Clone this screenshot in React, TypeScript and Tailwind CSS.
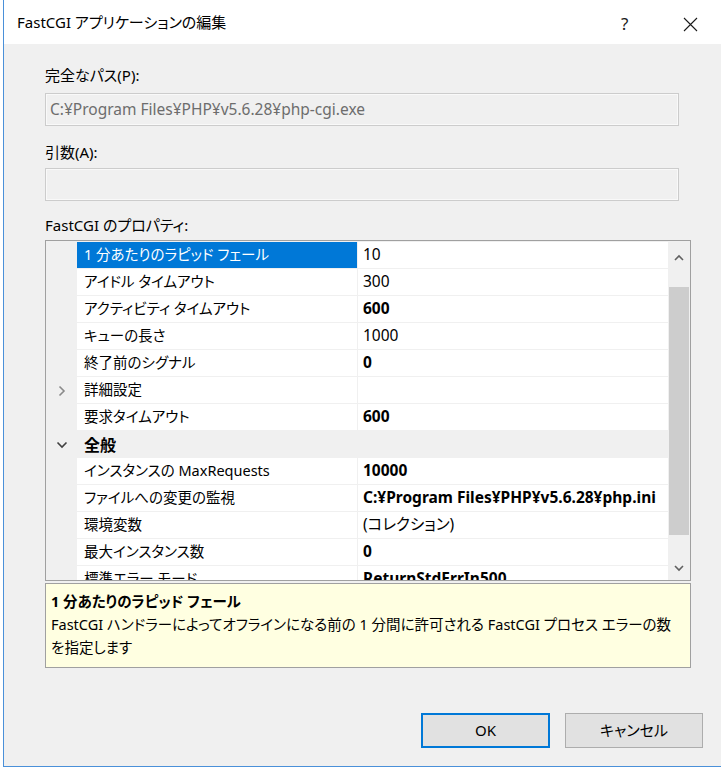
import React from "react";

type Row = {
  name: string;
  value?: string;
  bold?: boolean;
  selected?: boolean;
  chevron?: "right" | "down";
  category?: boolean;
};

const rows: Row[] = [
  { name: "1 分あたりのラピッド フェール", value: "10", selected: true },
  { name: "アイドル タイムアウト", value: "300" },
  { name: "アクティビティ タイムアウト", value: "600", bold: true },
  { name: "キューの長さ", value: "1000" },
  { name: "終了前のシグナル", value: "0", bold: true },
  { name: "詳細設定", value: "", chevron: "right" },
  { name: "要求タイムアウト", value: "600", bold: true },
  { name: "全般", category: true, chevron: "down" },
  { name: "インスタンスの MaxRequests", value: "10000", bold: true },
  { name: "ファイルへの変更の監視", value: "C:¥Program Files¥PHP¥v5.6.28¥php.ini", bold: true },
  { name: "環境変数", value: "(コレクション)" },
  { name: "最大インスタンス数", value: "0", bold: true },
  { name: "標準エラー モード", value: "ReturnStdErrIn500", bold: true },
];

function Chevron({ dir }: { dir: "right" | "down" }) {
  if (dir === "right") {
    return (
      <svg width="8" height="12" viewBox="0 0 8 12">
        <path d="M1.5 1.5 L6 6 L1.5 10.5" fill="none" stroke="#8a8a8a" strokeWidth="1.6" />
      </svg>
    );
  }
  return (
    <svg width="12" height="8" viewBox="0 0 12 8">
      <path d="M1.5 1.5 L6 6 L10.5 1.5" fill="none" stroke="#404040" strokeWidth="1.6" />
    </svg>
  );
}

function GridRow({ row }: { row: Row }) {
  if (row.category) {
    return (
      <div className="flex h-[27px] shrink-0 bg-[#f0f0f0]">
        <div className="w-[31px] flex items-center justify-center">
          {row.chevron && <Chevron dir={row.chevron} />}
        </div>
        <div className="flex-1 flex items-center pl-[7px] font-bold text-[16px]">{row.name}</div>
      </div>
    );
  }
  return (
    <div className="flex h-[27px] shrink-0">
      <div className="w-[31px] flex items-center justify-center bg-[#f0f0f0]">
        {row.chevron && <Chevron dir={row.chevron} />}
      </div>
      <div
        className={
          row.selected
            ? "w-[280px] flex items-center pl-[7px] bg-[#0078d7] text-white border-b border-[#f0f0f0] whitespace-nowrap text-[14.5px]"
            : "w-[280px] flex items-center pl-[7px] bg-white border-b border-[#f0f0f0] whitespace-nowrap text-[14.5px]"
        }
      >
        {row.name}
      </div>
      <div className="w-px bg-[#f0f0f0]" />
      <div
        className={
          row.bold
            ? "flex-1 flex items-center pl-[5px] bg-white border-b border-[#f0f0f0] font-bold whitespace-nowrap text-[15.5px]"
            : "flex-1 flex items-center pl-[5px] bg-white border-b border-[#f0f0f0] whitespace-nowrap text-[15.5px]"
        }
      >
        {row.value}
      </div>
    </div>
  );
}

export default function App() {
  return (
    <div className="w-[721px] h-[768px] bg-white pl-[3px] overflow-hidden">
      <div
        className="h-[767px] flex flex-col bg-[#f0f0f0] border-l border-b border-[#4a90d9] text-[15px] text-black [font-feature-settings:'palt']"
        style={{ fontFamily: '"Noto Sans", "Noto Sans CJK JP", sans-serif' }}
      >
        {/* Title bar */}
        <div className="h-[44px] bg-white flex items-center pl-[13px] shrink-0 relative">
          <span className="text-[15px]">FastCGI アプリケーションの編集</span>
          <span className="absolute left-[617px] top-[11px] text-[17px] text-[#1a1a1a]">?</span>
          <svg className="absolute left-[679px] top-[17px]" width="15" height="15" viewBox="0 0 15 15">
            <path d="M1 1 L14 14 M14 1 L1 14" stroke="#1a1a1a" strokeWidth="1.1" />
          </svg>
        </div>

        {/* Body */}
        <div className="flex flex-col pl-[41px] pr-[28px]">
          <div className="mt-[21px] h-[20px] leading-[20px]">完全なパス(P):</div>
          <div className="mt-[8px] h-[33px] border border-[#cccccc] shadow-[inset_0_0_0_1px_#f9f9f9] flex items-center pl-[4px] text-[#6d6d6d] text-[15.5px] w-[634px]">
            C:¥Program Files¥PHP¥v5.6.28¥php-cgi.exe
          </div>
          <div className="mt-[16px] h-[20px] leading-[20px]">引数(A):</div>
          <div className="mt-[6px] h-[33px] border border-[#cccccc] shadow-[inset_0_0_0_1px_#f9f9f9] w-[634px]" />
          <div className="mt-[14px] h-[20px] leading-[20px]">FastCGI のプロパティ:</div>

          {/* Property grid */}
          <div className="mt-[5px] h-[341px] w-[646px] border border-[#a0a0a0] flex overflow-hidden">
            <div className="flex flex-col w-[622px] pt-px bg-[#f0f0f0] overflow-hidden">
              {rows.map((r, i) => (
                <GridRow key={i} row={r} />
              ))}
            </div>
            <div className="w-[22px] flex flex-col bg-[#f0f0f0]">
              <div className="h-[30px] flex items-center justify-center pt-[2px]">
                <svg width="10" height="7" viewBox="0 0 10 7">
                  <path d="M1 6 L5 2 L9 6" fill="none" stroke="#606060" strokeWidth="1.6" />
                </svg>
              </div>
              <div className="h-[16px]" />
              <div className="h-[248px] mx-[1px] bg-[#cdcdcd]" />
              <div className="flex-1 flex items-end justify-center pb-[8px]">
                <svg width="10" height="7" viewBox="0 0 10 7">
                  <path d="M1 1 L5 5 L9 1" fill="none" stroke="#606060" strokeWidth="1.6" />
                </svg>
              </div>
            </div>
          </div>

          {/* Description */}
          <div className="mt-[2px] h-[85px] w-[646px] border border-[#a0a0a0] bg-[#ffffe1] px-[5px] pt-[6px] leading-[23px] whitespace-nowrap text-[14.5px]">
            <div className="font-bold">1 分あたりのラピッド フェール</div>
            <div>FastCGI ハンドラーによってオフラインになる前の 1 分間に許可される FastCGI プロセス エラーの数</div>
            <div>を指定します</div>
          </div>

          {/* Buttons */}
          <div className="mt-[45px] flex justify-end gap-[15px] mr-[-10px]">
            <button className="w-[129px] h-[35px] bg-[#e1e1e1] border-2 border-[#0078d7] text-[15px]">OK</button>
            <button className="w-[138px] h-[35px] bg-[#e1e1e1] border border-[#adadad] text-[15px]">キャンセル</button>
          </div>
        </div>
      </div>
    </div>
  );
}
